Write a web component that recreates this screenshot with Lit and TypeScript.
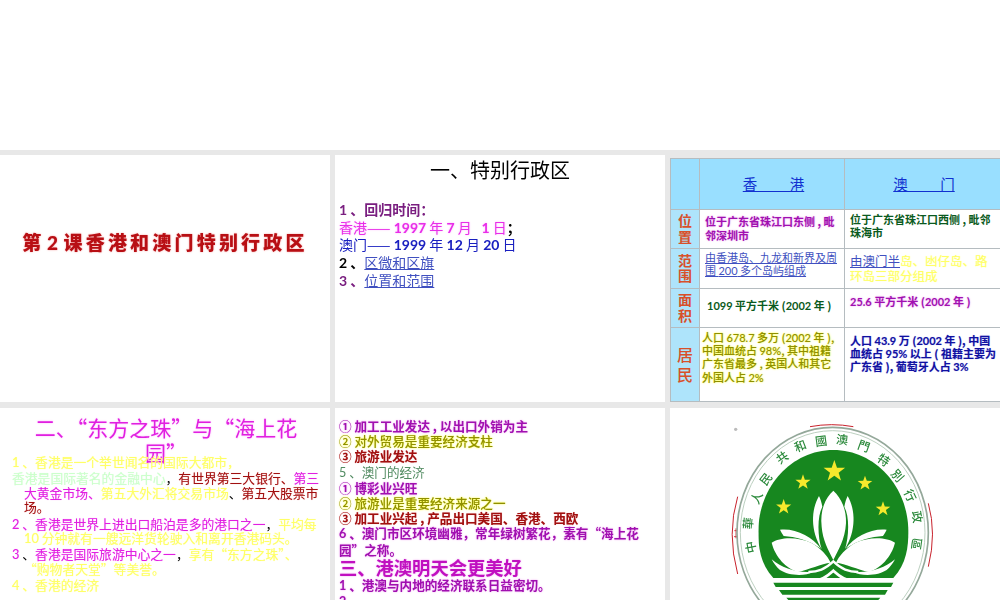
import { LitElement, html, css, svg } from "lit";
import { customElement } from "lit/decorators.js";

const ringChars: [string, number, number][] = [
  ["中", 254, 442], ["華", 246, 370], ["人", 272, 292], ["民", 300, 235], ["共", 350, 170],
  ["和", 405, 135], ["國", 468, 120], ["澳", 532, 116], ["門", 598, 135], ["特", 658, 178],
  ["別", 700, 225], ["行", 738, 285], ["政", 760, 350], ["區", 758, 432],
];
const stars: [number, number, number][] = [
  [508, 214, 34], [414, 247, 24], [600, 250, 23], [356, 321, 24], [654, 327, 23],
];
function starPoints(cx: number, cy: number, r: number) {
  const pts: string[] = [];
  for (let i = 0; i < 10; i++) {
    const rad = i % 2 ? r * 0.4 : r;
    const a = -Math.PI / 2 + (i * Math.PI) / 5;
    pts.push(`${(cx + rad * Math.cos(a)).toFixed(1)},${(cy + rad * Math.sin(a)).toFixed(1)}`);
  }
  return pts.join(" ");
}
function ringRotation(x: number, y: number) {
  return (Math.atan2(x - 505, 395 - y) * 180) / Math.PI;
}
/** Digits in the source are set in a Latin face, the rest in the CJK face. */
function t(text: string) {
  return text
    .split(/([0-9][0-9.%]*)/)
    .map((part, i) => (i % 2 ? html`<span class="n">${part}</span>` : part));
}
const lotusSide = svg`
  <path d="M462 288C438 330 436 392 470 447C458 410 456 350 472 320C470 308 466 296 462 288Z" fill="#fff"/>
  <path d="M345 389C392 384 442 410 468 446C430 420 390 410 356 408C352 402 348 396 345 389Z" fill="#fff"/>
  <path d="M320 428C345 410 400 410 438 428C468 444 488 468 497 488C470 490 430 510 400 515C365 508 330 470 320 428Z" fill="#fff"/>
  <path d="M320 478C350 505 400 520 445 515C420 530 370 527 345 510C335 502 326 490 320 478Z" fill="#fff"/>
`;

@customElement("app-root")
export class AppRoot extends LitElement {
  static styles = css`
    :host {
      display: block;
      width: 1000px;
      height: 600px;
      overflow: hidden;
      background: #e8e8e8;
      font-family: "Noto Sans CJK SC", sans-serif;
      color: #000;
    }
    .n { font-family: "Lato", sans-serif; }
    .page { filter: blur(0.3px); }
    .banner { height: 150px; background: #fff; }
    .grid {
      display: grid;
      grid-template-columns: repeat(3, 330px);
      grid-template-rows: 247px 192px;
      column-gap: 5px;
      row-gap: 6px;
      margin-top: 5px;
    }
    .cell { background: #fff; overflow: hidden; min-width: 0; }
    .title-cell { display: flex; justify-content: center; padding-top: 73px; box-sizing: border-box; }
    .lesson {
      font-size: 19px;
      font-weight: 900;
      line-height: 28px;
      color: #b80f14;
      letter-spacing: 3.2px;
      white-space: nowrap;
      text-shadow: 0 0 2px #f4a0a0;
    }
    .digit { display: inline-block; width: 19px; text-align: center; font-family: "Lato", sans-serif; }
    .intro { padding: 3px 4px 0 4px; }
    .intro h2 {
      margin: 0 0 19px;
      font-size: 20px;
      line-height: 24px;
      font-weight: 400;
      text-align: center;
    }
    .intro p { margin: 0; font-size: 14px; line-height: 17.7px; font-weight: 700; white-space: pre; }
    .thin { font-weight: 400; }
    .link { color: #4050c0; font-weight: 400; text-decoration: underline; }
    .table-cell { background: transparent; padding-top: 2.5px; }
    table {
      border-collapse: collapse;
      table-layout: fixed;
      width: 330px;
      height: 244px;
      background: #fff;
      font-size: 11px;
      line-height: 13.4px;
      font-weight: 700;
    }
    col.c1 { width: 29px; }
    col.c2 { width: 145px; }
    col.c3 { width: 156px; }
    td, th { border: 1px solid #b5bcc0; padding: 0 2px 0 5px; vertical-align: middle; }
    table { border-top: 1px solid #7f9aa5; border-bottom: 1px solid #808080; }
    th { background: #99dfff; font-weight: 400; font-size: 14.5px; text-align: center; }
    th a { color: #1030d0; text-decoration: underline; white-space: pre; }
    .side {
      background: #aee4fb;
      color: #d8502a;
      font-size: 14px;
      line-height: 15.5px;
      font-weight: 700;
      text-align: center;
      padding: 0;
    }
    .side.big { font-size: 16px; line-height: 20px; font-weight: 500; }
    .r0 { height: 51px; }
    .r1 { height: 39px; }
    .r2 { height: 40px; }
    .r3 { height: 39px; }
    .r4 { height: 74px; }
    .top { vertical-align: top; padding-top: 3px; }
    .top6 { vertical-align: top; padding-top: 6px; }
    .range { font-weight: 400; padding-top: 2px; vertical-align: top; }
    .big-cell { font-size: 12.5px; font-weight: 400; line-height: 15px; }
    .area { padding-left: 7px; padding-bottom: 3px; }
    .people { padding-left: 2px; padding-right: 4px; font-weight: 500; }
    .east { padding: 7px 10px 0 12px; font-size: 12.8px; line-height: 14.4px; }
    .east h2 {
      margin: 0 0 -10px;
      padding: 0 20px 0 20px;
      font-size: 21px;
      line-height: 25px;
      font-weight: 400;
      text-align: center;
      color: #e020e0;
      text-shadow: 0 0 2px #ffb0ff;
    }
    .east p { margin: 0 0 2px; padding-left: 12px; text-indent: -12px; }
    .econ { padding: 10px 4px 0 4px; font-size: 12.6px; line-height: 15.2px; font-weight: 700; }
    .econ p { margin: 0; }
    .econ p.olive { font-weight: 500; }
    .econ h3 { margin: 1px 0; font-size: 18.3px; line-height: 18px; font-weight: 700; color: #c010c0; }
    .purple { color: #a010b0; text-shadow: 0 0 2px #f0a0f0; }
    .violet { color: #7a1f80; }
    .magenta { color: #e82ee8; text-shadow: 0 0 2px #ffb0ff; }
    .navy { color: #1a20c0; }
    .gblue { color: #1010a0; text-shadow: 0 0 1px #a0a0f0; }
    .dgreen { color: #0a5a20; }
    .yellow { color: #ffff66; text-shadow: 0 0 1px #ffffa0; }
    .olive { color: #8f8f00; text-shadow: 0 0 2px #ffff00; }
    .mint { color: #ccffcc; text-shadow: 0 0 1px #ddffdd; }
    .dred { color: #a01010; text-shadow: 0 0 1px #f0a0a0; }
    .dkgreen { color: #508a60; font-weight: 400; }
    .brightm { color: #e020e0; text-shadow: 0 0 1px #ffa0ff; }
    .emblem { display: block; width: 330px; height: 192px; }
    .ring-text { font-size: 36px; font-weight: 500; fill: #2c8a3c; font-family: "Noto Sans CJK TC", sans-serif; }
  `;

  private renderEmblem() {
    return html`<svg class="emblem" viewBox="15 24 990 576" xmlns="http://www.w3.org/2000/svg">
      <circle cx="212" cy="88" r="5" fill="#bbb"/>
      <path d="M435 80Q500 68 565 80" fill="none" stroke="#c8222c" stroke-width="3"/>
      <path d="M218 290Q185 400 218 522" fill="none" stroke="#c8222c" stroke-width="3"/>
      <path d="M790 310Q815 400 790 500" fill="none" stroke="#c8222c" stroke-width="3"/>
      <path d="M208 392h12M213 385v30M207 410h12" fill="none" stroke="#c8222c" stroke-width="2.5"/>
      <ellipse cx="503" cy="398" rx="287" ry="316" fill="#fff" stroke="#94a89a" stroke-width="5"/>
      <ellipse cx="503" cy="398" rx="277" ry="306" fill="none" stroke="#bcd0c0" stroke-width="3"/>
      ${ringChars.map(
        ([c, x, y]) => svg`<text class="ring-text" text-anchor="middle" dominant-baseline="central"
          transform="translate(${x} ${y}) rotate(${ringRotation(x, y).toFixed(1)})">${c}</text>`,
      )}
      <path d="M325 534C285 490 280 440 280 395C280 260 380 150 505 150C630 150 730 260 730 395C730 440 725 490 685 534Z" fill="#17871f"/>
      ${stars.map(([x, y, r]) => svg`<polygon points="${starPoints(x, y, r)}" fill="#f6e92c"/>`)}
      <path d="M505 272C480 295 465 330 470 380C473 420 490 450 505 480C520 450 540 420 543 370C545 330 530 295 505 272Z" fill="#fff"/>
      ${lotusSide}
      <g transform="translate(1010 0) scale(-1 1)">${lotusSide}</g>
      <path d="M430 516C460 516 480 508 505 484C530 508 550 516 580 516" fill="none" stroke="#fff" stroke-width="7"/>
      <path d="M300 541H450C470 541 485 530 505 512C525 530 540 541 560 541H710" fill="none" stroke="#fff" stroke-width="8"/>
      <path d="M325 548H685L678 561H332Z" fill="#17871f"/>
      <path d="M342 570H668L660 584H352Z" fill="#17871f"/>
      <path d="M364 593H646L640 600H370Z" fill="#17871f"/>
    </svg>`;
  }

  render() {
    return html`<div class="page">
      <div class="banner"></div>
      <div class="grid">
        <section class="cell title-cell"><div class="lesson">第<span class="digit">2</span>课香港和澳门特别行政区</div></section>

        <section class="cell intro">
          <h2>一、特别行政区</h2>
          <p class="violet">${t("1 、回归时间：")}</p>
          <p><span class="magenta"><span class="thin">香港——</span> ${t("1997")} <span class="thin">年</span> ${t("7")} <span class="thin">月</span>   ${t("1")} <span class="thin">日</span></span>；</p>
          <p class="navy"><span class="thin">澳门——</span> ${t("1999")} <span class="thin">年</span> ${t("12")} <span class="thin">月</span> ${t("20")} <span class="thin">日</span></p>
          <p>${t("2 、")}<span class="link">区微和区旗</span></p>
          <p class="violet">${t("3 、")}<span class="link">位置和范围</span></p>
        </section>

        <section class="cell table-cell">
          <table>
            <colgroup><col class="c1"/><col class="c2"/><col class="c3"/></colgroup>
            <tr class="r0"><th></th><th><a>香          港</a></th><th><a>澳          门</a></th></tr>
            <tr class="r1">
              <td class="side">位<br/>置</td>
              <td class="purple">位于广东省珠江口东侧 , 毗邻深圳市</td>
              <td class="dgreen top">位于广东省珠江口西侧 , 毗邻珠海市</td>
            </tr>
            <tr class="r2">
              <td class="side">范<br/>围</td>
              <td class="link range">由香港岛、九龙和新界及周围 ${t("200")} 多个岛屿组成</td>
              <td class="big-cell"><span class="link">由澳门半</span><span class="yellow">岛、凼仔岛、路环岛三部分组成</span></td>
            </tr>
            <tr class="r3">
              <td class="side">面<br/>积</td>
              <td class="dgreen area">${t("1099")} 平方千米 (${t("2002")} 年 )</td>
              <td class="purple top6">${t("25.6")} 平方千米 (${t("2002")} 年 )</td>
            </tr>
            <tr class="r4">
              <td class="side big">居<br/>民</td>
              <td class="olive people top">人口 ${t("678.7")} 多万 (${t("2002")} 年 ), 中国血统占 ${t("98%")}, 其中祖籍广东省最多 , 英国人和其它外国人占 ${t("2%")}</td>
              <td class="gblue top6">人口 ${t("43.9")} 万 (${t("2002")} 年 ), 中国血统占 ${t("95%")} 以上 ( 祖籍主要为广东省 ), 葡萄牙人占 ${t("3%")}</td>
            </tr>
          </table>
        </section>

        <section class="cell east">
          <h2>二、“东方之珠”与“海上花园”</h2>
          <p class="yellow">${t("1 、香港是一个举世闻名的国际大都市，")}</p>
          <p><span class="mint">香港是国际著名的金融中心</span>，<span class="dred">有世界第三大银行、</span><span class="brightm">第三大黄金市场、</span><span class="yellow">第五大外汇将交易市场</span>、<span class="dred">第五大股票市场。</span></p>
          <p><span class="brightm">${t("2 、香港是世界上进出口船泊是多的港口之一")}</span>，<span class="yellow">${t("平均每 10 分钟就有一艘远洋货轮驶入和离开香港码头。")}</span></p>
          <p><span class="brightm">${t("3 ")}</span>、<span class="brightm">香港是国际旅游中心之一</span>，<span class="yellow">享有“东方之珠”、<br/>“购物者天堂”等美誉。</span></p>
          <p class="yellow">${t("4 、香港的经济")}</p>
        </section>

        <section class="cell econ">
          <p class="purple">① 加工工业发达 , 以出口外销为主</p>
          <p class="olive">② 对外贸易是重要经济支柱</p>
          <p class="dred">③ 旅游业发达</p>
          <p class="dkgreen">${t("5 、澳门的经济")}</p>
          <p class="purple">① 博彩业兴旺</p>
          <p class="olive">② 旅游业是重要经济来源之一</p>
          <p class="dred">③ 加工业兴起 , 产品出口美国、香港、西欧</p>
          <p class="purple">${t("6 、澳门市区环境幽雅，常年绿树繁花，素有“海上花园”之称。")}</p>
          <h3 class="purple">三、港澳明天会更美好</h3>
          <p class="purple">${t("1 、港澳与内地的经济联系日益密切。")}</p>
          <p class="purple">${t("2 、")}</p>
        </section>

        <section class="cell">${this.renderEmblem()}</section>
      </div>
    </div>`;
  }
}
